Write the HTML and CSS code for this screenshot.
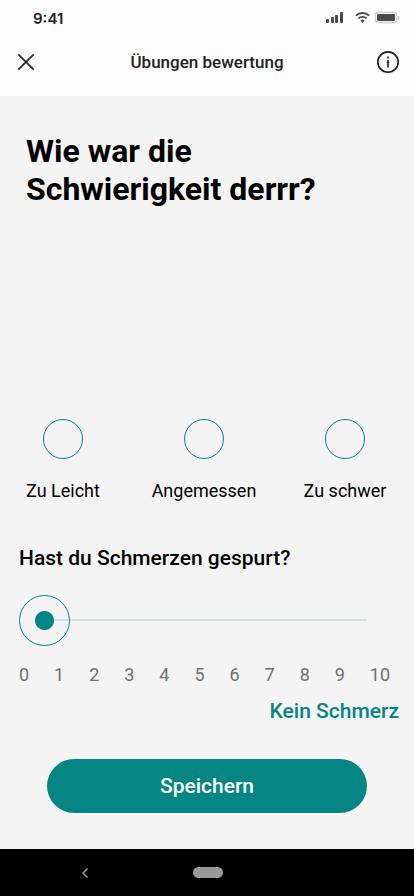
FILE: index.html
```html
<!DOCTYPE html>
<html lang="de">
<head>
<meta charset="utf-8">
<meta name="viewport" content="width=device-width, initial-scale=1">
<title>Übungen bewertung</title>
<link rel="stylesheet" href="styles.css">
</head>
<body>
<header class="top">
  <div class="status">
    <span class="time">9:41</span>
    <svg class="status-icons" width="74" height="14" viewBox="0 0 74 14" aria-hidden="true">
      <g fill="#4a4a4a">
        <rect x="0" y="8" width="3" height="4" rx="1"/>
        <rect x="5" y="6" width="3" height="6" rx="1"/>
        <rect x="9" y="4" width="3" height="8" rx="1"/>
        <rect x="14" y="1" width="3" height="11" rx="1"/>
      </g>
      <g fill="none" stroke="#4a4a4a" stroke-width="1.8">
        <path d="M29.800 4.700a9.700 9.700 0 0 1 13.400 0"/>
        <path d="M32.400 7.500a6 6 0 0 1 8.200 0"/>
      </g>
      <path d="M34.400 9.500a3.100 3.100 0 0 1 4.200 0L36.500 11.900z" fill="#4a4a4a"/>
      <rect x="49.500" y="1.500" width="21" height="10" rx="2.500" fill="#fdfdfd" stroke="#cfcfcf" stroke-width="1.500"/>
      <rect x="51" y="3" width="18" height="7" rx="1" fill="#4a4a4a"/>
      <path d="M72 5v4q1.500-.6 1.500-2T72 5z" fill="#bbb"/>
    </svg>
  </div>
  <div class="bar">
    <button class="icon-btn" type="button" aria-label="Schließen">
      <svg width="24" height="24" viewBox="0 0 24 24" fill="none" stroke="#2b2b2b" stroke-width="1.800"><path d="M4.300 4.300l15.400 15.400M19.700 4.300L4.300 19.700"/></svg>
    </button>
    <h1 class="title">Übungen bewertung</h1>
    <button class="icon-btn" type="button" aria-label="Information">
      <svg width="24" height="24" viewBox="0 0 24 24" fill="none" stroke="#222"><circle cx="12" cy="12" r="10.200" stroke-width="1.700"/><path d="M12 10v7.500M12 6.500v2" stroke-width="1.700"/></svg>
    </button>
  </div>
</header>
<main class="content">
  <form class="form">
    <fieldset class="difficulty">
      <legend class="heading">Wie war die Schwierigkeit derrr?</legend>
      <div class="options">
        <label class="option"><input class="radio" type="radio" name="difficulty" value="leicht">Zu Leicht</label>
        <label class="option"><input class="radio" type="radio" name="difficulty" value="angemessen">Angemessen</label>
        <label class="option"><input class="radio" type="radio" name="difficulty" value="schwer">Zu schwer</label>
      </div>
    </fieldset>
    <label class="question" for="pain">Hast du Schmerzen gespurt?</label>
    <input class="slider" id="pain" type="range" min="0" max="10" value="0">
    <div class="scale">
      <span>0</span><span>1</span><span>2</span><span>3</span><span>4</span><span>5</span><span>6</span><span>7</span><span>8</span><span>9</span><span>10</span>
    </div>
    <output class="result" for="pain">Kein Schmerz</output>
    <button class="save" type="button">Speichern</button>
  </form>
</main>
<nav class="nav">
  <button class="nav-btn back" type="button" aria-label="Zurück">
    <svg width="12" height="12" viewBox="0 0 12 12" fill="none" stroke="#999" stroke-width="1.500"><path d="M8.500 1.500L4 6l4.500 4.500"/></svg>
  </button>
  <button class="nav-btn home" type="button" aria-label="Startseite"></button>
</nav>
</body>
</html>
```

FILE: styles.css
```css
* {
  box-sizing: border-box;
}

body {
  margin: 0;
  min-height: 100vh;
  display: flex;
  flex-direction: column;
  background: #f4f4f4;
  color: #000;
  font-family: Roboto, "Liberation Sans", sans-serif;
}

button {
  font-family: inherit;
  border: 0;
  padding: 0;
  background: none;
  cursor: pointer;
}

.top {
  background: #fdfdfd;
  padding-bottom: 16px;
}

.status {
  display: flex;
  justify-content: space-between;
  align-items: center;
  height: 36px;
  padding: 0 14px 0 33px;
}

.time {
  font-family: Inter, sans-serif;
  font-size: 15px;
  font-weight: 600;
  color: #222;
}

.bar {
  display: flex;
  justify-content: space-between;
  align-items: center;
  height: 44px;
  padding: 8px 14px 0;
}

.icon-btn,
.icon-btn svg {
  display: block;
}

.title {
  margin: 0;
  font-size: 17px;
  line-height: 24px;
  font-weight: 500;
  color: #222;
}

.content {
  flex: 1;
}

.form {
  display: flex;
  flex-direction: column;
}

.difficulty {
  min-width: 0;
  margin: 0;
  padding: 0;
  border: 0;
}

.heading {
  max-width: 360px;
  padding: 36px 26px 0;
  font-size: 32px;
  line-height: 38px;
  font-weight: 700;
}

.options {
  display: flex;
  justify-content: space-between;
  margin-top: 211px;
  padding: 0 16px 0 10px;
}

.option {
  display: flex;
  flex-direction: column;
  align-items: center;
  gap: 20px;
  width: 106px;
  font-size: 18px;
  line-height: 24px;
}

.radio {
  appearance: none;
  width: 40px;
  height: 40px;
  margin: 0;
  border: 1px solid #068585;
  border-radius: 50%;
}

.radio:checked {
  background: radial-gradient(circle, #068585 9px, transparent 10px);
}

.question {
  margin: 41px 19px 0;
  font-size: 21px;
  line-height: 28px;
  font-weight: 500;
}

.slider {
  appearance: none;
  height: 51px;
  margin: 23px 47px 0 19px;
  background: linear-gradient(#cae3e3, #cae3e3) right 24px / calc(100% - 26px) 2px no-repeat;
}

.slider::-webkit-slider-thumb {
  appearance: none;
  width: 51px;
  height: 51px;
  border: 1px solid #068585;
  border-radius: 50%;
  background: radial-gradient(circle, #068585 9px, transparent 10px);
}

.scale {
  display: flex;
  margin-top: 17px;
  padding: 0 24px 0 19px;
  font-size: 18px;
  line-height: 24px;
  color: #707070;
}

.scale span {
  flex: 1;
}

.scale span:last-child {
  flex: none;
}

.result {
  margin: 10px 15px 0;
  text-align: right;
  font-size: 21px;
  line-height: 28px;
  font-weight: 500;
  color: #068585;
}

.save {
  height: 54px;
  margin: 34px 47px 36px;
  border-radius: 27px;
  background: #068585;
  color: #fff;
  font-size: 21px;
  font-weight: 500;
}

.nav {
  display: grid;
  grid-template-columns: 1fr auto 1fr;
  align-items: center;
  justify-items: center;
  height: 47px;
  padding-left: 2px;
  background: #000;
}

.nav-btn {
  display: flex;
}

.back {
  padding-right: 26px;
}

.home {
  width: 30px;
  height: 11px;
  border-radius: 6px;
  background: #999;
}
```
